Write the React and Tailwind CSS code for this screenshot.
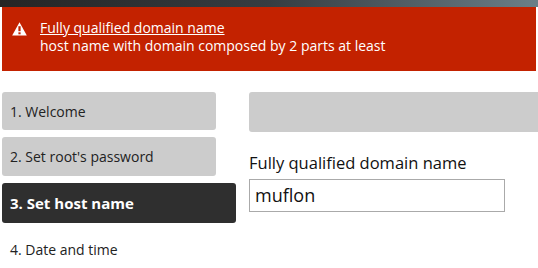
import React from "react";

export default function App() {
  const font = { fontFamily: '"Open Sans", "Noto Sans", sans-serif' };
  return (
    <div className="w-[538px] h-[268px] bg-white overflow-hidden" style={font}>
      <div className="h-[7px] bg-gradient-to-r from-[#252525] via-[#363d42] to-[#6b7f88]" />
      <div className="mx-[2px] h-[64px] bg-[#c32200] flex items-start pl-[10px] pt-[12px] text-white">
        <svg width="15" height="14" viewBox="0 0 15 14" className="mt-[3px] shrink-0">
          <path d="M7.5 0.3 L14.8 13.5 L0.2 13.5 Z" fill="#fff" strokeLinejoin="round" />
          <rect x="6.4" y="4.2" width="2.2" height="5" fill="#c32200" />
          <rect x="6.4" y="10.3" width="2.2" height="2" fill="#c32200" />
        </svg>
        <div className="ml-[13px] text-[14px] leading-[18px]">
          <div className="underline underline-offset-1">Fully qualified domain name</div>
          <div>host name with domain composed by 2 parts at least</div>
        </div>
      </div>
      <div className="flex mt-[21px]">
        <div className="w-[236px] ml-[2px] flex flex-col">
          <div className="w-[214px] h-[38px] bg-[#cccccc] rounded-[3px] flex items-center pl-[8px] text-[14px] text-[#222]">1. Welcome</div>
          <div className="w-[214px] h-[39px] mt-[7px] bg-[#cccccc] rounded-[3px] flex items-center pl-[8px] text-[14px] text-[#222]">2. Set root's password</div>
          <div className="w-[234px] h-[40px] mt-[7px] bg-[#2f2f2f] rounded-[3px] flex items-center pl-[8px] text-[15px] font-bold text-white">3. Set host name</div>
          <div className="h-[38px] mt-[7px] flex items-center pl-[8px] text-[14px] text-[#222]">4. Date and time</div>
        </div>
        <div className="ml-[11px] flex-1 flex flex-col">
          <div className="h-[40px] bg-[#cccccc] rounded-l-[3px]" />
          <div className="mt-[20px] text-[16.5px] text-[#111] leading-[22px]">Fully qualified domain name</div>
          <div className="mt-[5px] w-[256px] h-[33px] border border-[#aaaaaa] flex items-center pl-[5px] text-[18px] text-[#111]">muflon</div>
        </div>
      </div>
    </div>
  );
}
